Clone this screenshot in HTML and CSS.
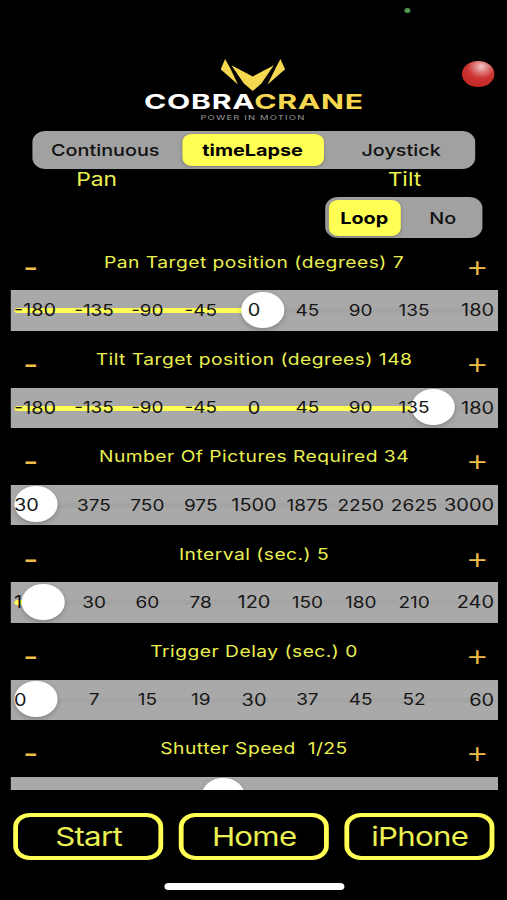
FILE: index.html
```html
<!DOCTYPE html>
<html lang="en">
  <head>
    <meta charset="UTF-8" />
    <meta name="viewport" content="width=device-width, initial-scale=1.0" />
    <title>CobraCrane</title>
    <link rel="stylesheet" href="styles.css">
  </head>
  <body>
    <div class="screen">
      <header class="header">
        <svg class="logo" width="190" height="76" viewBox="0 0 228 76" preserveAspectRatio="none">
          <g fill="#f6d850">
            <path d="M84.700 9 L80.300 19.300 L97.500 34.500 L90 18.500 Z" />
            <path d="M140 9 L144.700 19.300 L127.200 34.500 L135 18.500 Z" />
            <path d="M91 15.300 L112.300 26.500 L133.500 15.300 L121 33.500 L112.300 41 L103.500 33.500 Z" />
          </g>
          <text class="logo-name" x="3.500" y="58.700" textLength="220" lengthAdjust="spacingAndGlyphs"><tspan fill="#fff">COBRA</tspan><tspan fill="#f6d850">CRANE</tspan></text>
          <text class="logo-tag" x="60" y="69.500" textLength="105" lengthAdjust="spacingAndGlyphs">POWER IN MOTION</text>
        </svg>
        <span class="camera-dot"></span>
        <span class="ball"></span>
      </header>

      <div class="segment modes">
        <button>Continuous</button>
        <button class="selected">timeLapse</button>
        <button>Joystick</button>
      </div>

      <div class="axis">
        <span>Pan</span>
        <span>Tilt</span>
      </div>

      <div class="segment loop">
        <button class="selected">Loop</button>
        <button>No</button>
      </div>

      <!-- Scrolling list of settings -->
      <main class="settings">
        <section class="setting">
          <div class="head"><button class="step minus">-</button><h2>Pan Target position (degrees) 7</h2><button class="step">+</button></div>
          <div class="bar">
            <input type="range" min="-180" max="180" value="7" style="--fill: 51.9%" />
            <div class="ticks"><span>-180</span><span>-135</span><span>-90</span><span>-45</span><span>0</span><span>45</span><span>90</span><span>135</span><span>180</span></div>
          </div>
        </section>

        <section class="setting">
          <div class="head"><button class="step minus">-</button><h2>Tilt Target position (degrees) 148</h2><button class="step">+</button></div>
          <div class="bar">
            <input type="range" min="-180" max="180" value="148" style="--fill: 91.1%" />
            <div class="ticks"><span>-180</span><span>-135</span><span>-90</span><span>-45</span><span>0</span><span>45</span><span>90</span><span>135</span><span>180</span></div>
          </div>
        </section>

        <section class="setting">
          <div class="head"><button class="step minus">-</button><h2>Number Of Pictures Required 34</h2><button class="step">+</button></div>
          <div class="bar">
            <input type="range" min="30" max="3000" value="34" style="--fill: 0.1%" />
            <div class="ticks"><span>30</span><span>375</span><span>750</span><span>975</span><span>1500</span><span>1875</span><span>2250</span><span>2625</span><span>3000</span></div>
          </div>
        </section>

        <section class="setting">
          <div class="head"><button class="step minus">-</button><h2>Interval (sec.) 5</h2><button class="step">+</button></div>
          <div class="bar">
            <input type="range" min="1" max="240" value="5" style="--fill: 1.7%" />
            <div class="ticks"><span>1</span><span>30</span><span>60</span><span>78</span><span>120</span><span>150</span><span>180</span><span>210</span><span>240</span></div>
          </div>
        </section>

        <section class="setting">
          <div class="head"><button class="step minus">-</button><h2>Trigger Delay (sec.) 0</h2><button class="step">+</button></div>
          <div class="bar">
            <input type="range" min="0" max="60" value="0" style="--fill: 0%" />
            <div class="ticks"><span>0</span><span>7</span><span>15</span><span>19</span><span>30</span><span>37</span><span>45</span><span>52</span><span>60</span></div>
          </div>
        </section>

        <section class="setting">
          <div class="head"><button class="step minus">-</button><h2>Shutter Speed&nbsp; 1/25</h2><button class="step">+</button></div>
          <div class="bar">
            <input type="range" min="0" max="100" value="43" style="--fill: 43%" />
          </div>
        </section>
      </main>

      <nav class="actions">
        <button>Start</button>
        <button>Home</button>
        <button>iPhone</button>
      </nav>

      <div class="home-bar"></div>
    </div>
  </body>
</html>
```
FILE: styles.css
```css
* {
  box-sizing: border-box;
}
body {
  margin: 0;
  background: #000;
  overflow: hidden;
}
button {
  padding: 0;
  border: 0;
  background: none;
  font: inherit;
  letter-spacing: inherit;
  color: inherit;
}

/* the whole screen is drawn wide: 422.5px stretched to 507px */
.screen {
  position: relative;
  display: flex;
  flex-direction: column;
  width: 422.5px;
  height: 900px;
  overflow: hidden;
  background: #000;
  color: #ebf052;
  font-family: Inter, "Liberation Sans", sans-serif;
  transform: scaleX(1.2);
  transform-origin: 0 0;
}

.header {
  flex: none;
  height: 131px;
  padding: 50px 0 0 116.7px;
}
.logo {
  display: block;
}
.logo-name {
  font-size: 20.5px;
  font-weight: 700;
  letter-spacing: 0.5px;
}
.logo-tag {
  font-size: 6.5px;
  letter-spacing: 0.8px;
  fill: #999;
}
.camera-dot {
  position: absolute;
  top: 8px;
  left: 337px;
  width: 5px;
  height: 5px;
  border-radius: 50%;
  background: #4c9a50;
}
.ball {
  position: absolute;
  top: 60.5px;
  left: 385.3px;
  width: 27px;
  height: 26.5px;
  border-radius: 50%;
  background: radial-gradient(circle at 60% 22%, #f3c6c6 0, #df8080 20%, #cc3431 45%, #c32a26 75%, #8c1c19 100%);
}

.segment {
  display: flex;
  flex: none;
  background: #a1a1a1;
  color: #111;
  font-size: 16.5px;
  font-weight: 500;
}
.segment .selected {
  background: #ffff54;
  color: #000;
  font-weight: 700;
  box-shadow: 0 1px 3px rgba(0, 0, 0, 0.25);
}
.modes {
  width: 369px;
  height: 37.5px;
  margin-left: 27px;
  padding: 2.5px 3px 3px 2px;
  border-radius: 11px;
}
.modes button {
  flex: 1;
  padding: 0 5px 0 0;
  border-radius: 8px;
}
.modes .selected {
  flex: none;
  width: 118px;
  padding: 0;
}
.modes button:last-child {
  padding: 0 0 0 6px;
}
.axis {
  display: flex;
  flex: none;
  justify-content: space-between;
  height: 28.5px;
  padding: 0 71.5px 0 63.5px;
  font-size: 19px;
  line-height: 22px;
}
.loop {
  width: 130.5px;
  height: 41px;
  margin-left: 271px;
  padding: 2.5px;
  border-radius: 11px;
}
.loop button {
  flex: none;
  width: 60px;
  border-radius: 8px;
}
.loop button:last-child {
  width: 71px;
}

.settings {
  flex: none;
  height: 552px;
  padding: 0 7.8px 0 8.7px;
  overflow: hidden;
}
.setting {
  height: 97.3px;
}
.head {
  display: grid;
  grid-template-columns: 34px 1fr 34px;
  height: 57px;
  align-items: center;
}
/* the list is scrolled a little past its top */
.setting:first-child {
  margin-top: -4.7px;
}
.head h2 {
  margin: 0;
  font-size: 16px;
  font-weight: 400;
  letter-spacing: 0.42px;
  text-align: center;
}
.step {
  padding-top: 8px;
  color: #efbd48;
  font-size: 30px;
  font-weight: 300;
  line-height: 30px;
}
.minus {
  padding-top: 12px;
  font-size: 27px;
  font-weight: 500;
}
.bar {
  position: relative;
  height: 40.3px;
  padding: 0 3px;
  background: #a9a9a9;
}
.bar input {
  display: block;
  width: 100%;
  height: 40px;
  margin: 0;
  appearance: none;
  background: none;
}
.bar input::-webkit-slider-runnable-track {
  height: 5px;
  margin-top: 1px;
  border-radius: 3px;
  background: linear-gradient(90deg, #ffff54 var(--fill), #a4a4a4 var(--fill));
}
.bar input::-webkit-slider-thumb {
  appearance: none;
  width: 36px;
  height: 36px;
  margin-top: -16.5px;
  border-radius: 50%;
  background: #fff;
  box-shadow: 0 2px 5px rgba(0, 0, 0, 0.22);
}
/* labels lie over the slider thumb */
.ticks {
  position: absolute;
  inset: 0 3px;
  display: grid;
  grid-template-columns: repeat(9, 1fr);
  align-items: center;
  justify-items: center;
  color: #161616;
  font-size: 15.8px;
  pointer-events: none;
}
.ticks span:nth-child(4n + 1) {
  font-size: 16.6px;
}
.ticks span:first-child {
  justify-self: start;
}
.ticks span:last-child {
  justify-self: end;
}

.actions {
  display: grid;
  grid-template-columns: repeat(3, 125px);
  gap: 13px;
  flex: none;
  height: 46.5px;
  margin: 23px 0 0 11.3px;
}
.actions button {
  border: 4px solid #ffff54;
  border-radius: 14px;
  font-size: 26px;
  letter-spacing: -0.6px;
}
.home-bar {
  width: 150px;
  height: 7px;
  margin: 23.5px 0 0 136.7px;
  border-radius: 4px;
  background: #fff;
}
```
